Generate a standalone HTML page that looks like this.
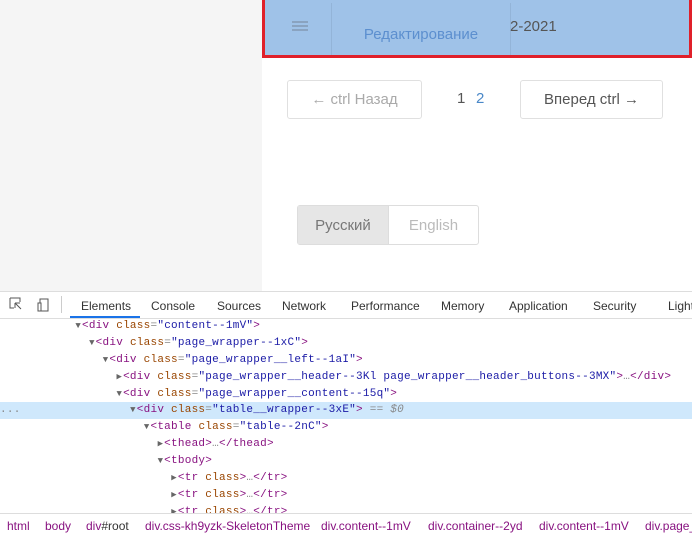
<!DOCTYPE html><html><head><meta charset="utf-8"><style>
*{margin:0;padding:0;box-sizing:border-box}
body{width:692px;height:538px;overflow:hidden;background:#fff;font-family:"Liberation Sans",sans-serif;position:relative}
.a{position:absolute}
.btn{position:absolute;border:1px solid #e0e0e0;border-radius:3px;font-size:15px;display:flex;align-items:center;justify-content:center}
.code{position:absolute;left:0;width:692px;height:17px;font:11px/17px "Liberation Mono",monospace;letter-spacing:0.25px;white-space:pre;color:#888;overflow:hidden}
.code b{font-weight:normal;font-size:9px;display:inline-block;width:6.6px;color:#666}
.t{color:#881280}.n{color:#994500}.v{color:#1a1aa6}
.tabs{position:absolute;left:0;top:0;width:692px;height:538px;overflow:hidden}
.tabs span{position:absolute;font-size:12px;color:#333;white-space:nowrap}
.bc{position:absolute;left:0;top:0;width:692px;height:538px;overflow:hidden}
.bc span{position:absolute;top:519px;font-size:12px;color:#881280;white-space:nowrap}
</style></head><body>
<div class="a" style="left:0;top:0;width:262px;height:291px;background:#f5f5f5"></div>
<div class="a" style="left:262px;top:0;width:430px;height:58px;background:#9fc2e8;border:3px solid #e0202a;border-top:none"></div>
<div class="a" style="left:292px;top:21px;width:16px;height:2px;background:#8aa3c0;box-shadow:0 4px 0 #8aa3c0,0 8px 0 #8aa3c0"></div>
<div class="a" style="left:331px;top:3px;width:180px;height:52px;border-left:1px solid #93b4d8;border-right:1px solid #93b4d8"></div>
<div class="a" style="left:336px;top:26px;width:170px;text-align:center;font-size:15px;color:#5c8fcf">Редактирование</div>
<div class="a" style="left:510px;top:18px;font-size:15px;color:#555">2-2021</div>
<div class="btn" style="left:287px;top:80px;width:135px;height:39px;color:#aaa">← ctrl Назад</div>
<div class="a" style="left:457px;top:90px;font-size:15px;color:#555">1</div>
<div class="a" style="left:476px;top:90px;font-size:15px;color:#4a88c8">2</div>
<div class="btn" style="left:520px;top:80px;width:143px;height:39px;color:#555">Вперед ctrl →</div>
<div class="btn" style="left:297px;top:205px;width:182px;height:40px;border-color:#ddd"></div>
<div class="a" style="left:298px;top:206px;width:90px;height:38px;background:#e6e6e6;display:flex;align-items:center;justify-content:center;font-size:15px;color:#777">Русский</div>
<div class="a" style="left:388px;top:206px;width:90px;height:38px;display:flex;align-items:center;justify-content:center;font-size:15px;color:#bbb;border-left:1px solid #ddd">English</div>
<div class="a" style="left:0;top:291px;width:692px;height:28px;background:#fff;border-top:1px solid #ddd;border-bottom:1px solid #ddd"></div>
<svg class="a" style="left:9px;top:297px" width="42" height="16"><path d="M1 1h10v4M1 1v10h4M6 6l6 6M6 6v5M6 6h5" stroke="#555" fill="none"/><rect x="31" y="2" width="8" height="12" stroke="#555" fill="none"/><rect x="29" y="6" width="3" height="8" stroke="#555" fill="#fff"/></svg>
<div class="a" style="left:61px;top:296px;width:1px;height:17px;background:#ccc"></div>
<div class="tabs"><span style="left:81px;top:299px">Elements</span><span style="left:151px;top:299px">Console</span><span style="left:217px;top:299px">Sources</span><span style="left:282px;top:299px">Network</span><span style="left:351px;top:299px">Performance</span><span style="left:441px;top:299px">Memory</span><span style="left:509px;top:299px">Application</span><span style="left:593px;top:299px">Security</span><span style="left:668px;top:299px">Lighthouse</span></div>
<div class="a" style="left:70px;top:316px;width:70px;height:2px;background:#1a73e8"></div>
<div class="a" style="left:0;top:402px;width:692px;height:17px;background:#cfe8fc"></div>
<div class="code" style="top:318px">           <b>▼</b><span class="t">&lt;div</span> <span class="n">class</span>=<span class="v">"content--1mV"</span><span class="t">&gt;</span></div>
<div class="code" style="top:335px">             <b>▼</b><span class="t">&lt;div</span> <span class="n">class</span>=<span class="v">"page_wrapper--1xC"</span><span class="t">&gt;</span></div>
<div class="code" style="top:352px">               <b>▼</b><span class="t">&lt;div</span> <span class="n">class</span>=<span class="v">"page_wrapper__left--1aI"</span><span class="t">&gt;</span></div>
<div class="code" style="top:369px">                 <b>▶</b><span class="t">&lt;div</span> <span class="n">class</span>=<span class="v">"page_wrapper__header--3Kl page_wrapper__header_buttons--3MX"</span><span class="t">&gt;</span>…<span class="t">&lt;/div&gt;</span></div>
<div class="code" style="top:386px">                 <b>▼</b><span class="t">&lt;div</span> <span class="n">class</span>=<span class="v">"page_wrapper__content--15q"</span><span class="t">&gt;</span></div>
<div class="code" style="top:402px">...                <b>▼</b><span class="t">&lt;div</span> <span class="n">class</span>=<span class="v">"table__wrapper--3xE"</span><span class="t">&gt;</span> == <i>$0</i></div>
<div class="code" style="top:419px">                     <b>▼</b><span class="t">&lt;table</span> <span class="n">class</span>=<span class="v">"table--2nC"</span><span class="t">&gt;</span></div>
<div class="code" style="top:436px">                       <b>▶</b><span class="t">&lt;thead&gt;</span>…<span class="t">&lt;/thead&gt;</span></div>
<div class="code" style="top:453px">                       <b>▼</b><span class="t">&lt;tbody&gt;</span></div>
<div class="code" style="top:470px">                         <b>▶</b><span class="t">&lt;tr</span> <span class="n">class</span><span class="t">&gt;</span>…<span class="t">&lt;/tr&gt;</span></div>
<div class="code" style="top:487px">                         <b>▶</b><span class="t">&lt;tr</span> <span class="n">class</span><span class="t">&gt;</span>…<span class="t">&lt;/tr&gt;</span></div>
<div class="code" style="top:504px">                         <b>▶</b><span class="t">&lt;tr</span> <span class="n">class</span><span class="t">&gt;</span>…<span class="t">&lt;/tr&gt;</span></div>
<div class="a" style="left:0;top:513px;width:692px;height:25px;background:#fff;border-top:1px solid #ddd"></div>
<div class="bc"><span style="left:7px">html</span><span style="left:45px">body</span><span style="left:86px">div<b style="font-weight:normal;color:#333">#root</b></span><span style="left:145px">div.css-kh9yzk-SkeletonTheme</span><span style="left:321px">div.content--1mV</span><span style="left:428px">div.container--2yd</span><span style="left:539px">div.content--1mV</span><span style="left:645px">div.page_wrapper</span></div>
</body></html>
